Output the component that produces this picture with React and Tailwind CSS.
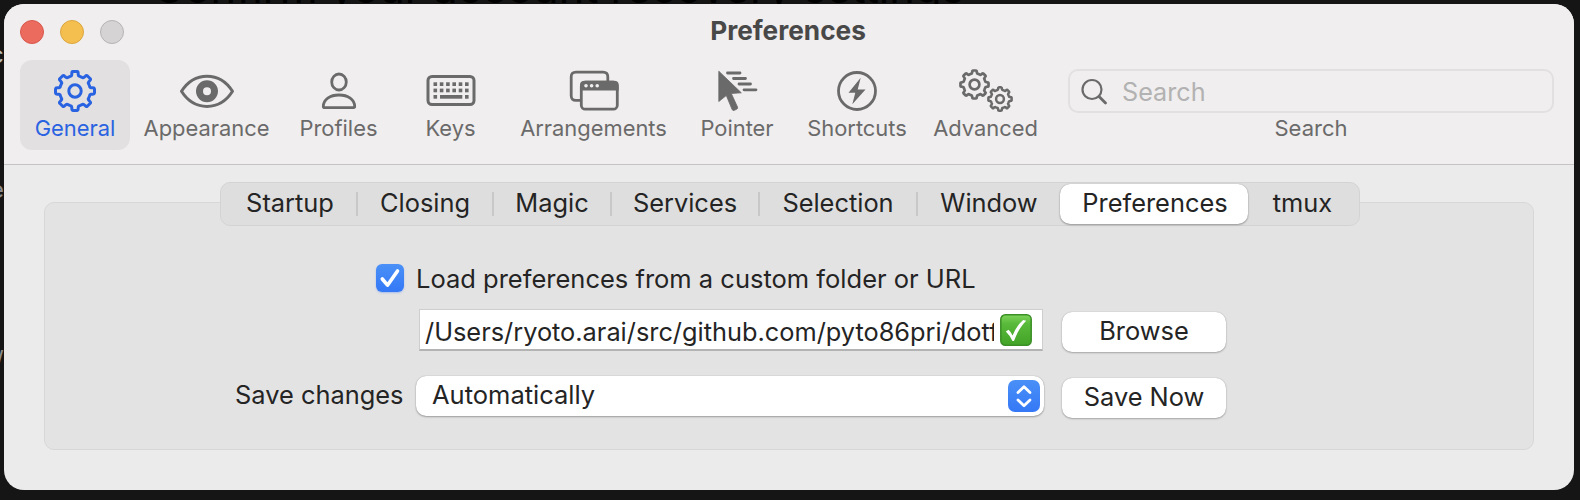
import React from "react";

// Outline of a cog with rounded teeth, centred on the origin.
function cogPath(teeth, outer, inner) {
  const step = (Math.PI * 2) / teeth;
  const depth = outer - inner;
  const at = (r, t) => `${(r * Math.sin(t * step)).toFixed(2)} ${(-r * Math.cos(t * step)).toFixed(2)}`;
  const parts = [];
  for (let i = 0; i < teeth; i++) {
    parts.push(
      `${i ? "L" : "M"}${at(outer, i - 0.14)}`,
      `L${at(outer, i + 0.14)}`,
      `Q${at(outer, i + 0.21)} ${at(outer - depth * 0.4, i + 0.225)}`,
      `L${at(inner + depth * 0.3, i + 0.25)}`,
      `Q${at(inner - depth * 0.08, i + 0.29)} ${at(inner, i + 0.4)}`,
      `L${at(inner, i + 0.6)}`,
      `Q${at(inner - depth * 0.08, i + 0.71)} ${at(inner + depth * 0.3, i + 0.75)}`,
      `L${at(outer - depth * 0.4, i + 0.775)}`,
      `Q${at(outer, i + 0.79)} ${at(outer, i + 0.86)}`
    );
  }
  return parts.join("") + "Z";
}

function Cog({ cx, cy, teeth = 8, outer, inner, hole, stroke }) {
  return (
    <g transform={`translate(${cx} ${cy})`} fill="none" stroke="currentColor" strokeWidth={stroke} strokeLinejoin="round">
      <path d={cogPath(teeth, outer, inner)} />
      <circle r={hole} />
    </g>
  );
}

const icons = {
  general: (
    <svg width="44" height="44" viewBox="0 0 44 44">
      <Cog cx={22} cy={22} outer={19.6} inner={15.4} hole={6.2} stroke={3} />
    </svg>
  ),
  appearance: (
    <svg width="56" height="44" viewBox="0 0 56 44" fill="none" stroke="currentColor">
      <path d="M2.500 22.300C9 12 18 7.200 28 7.200S47 12 53.500 22.300C47 32.600 38 37.400 28 37.400S9 32.600 2.500 22.300Z" strokeWidth="3" strokeLinejoin="round" />
      <circle cx="28" cy="22.300" r="7.500" strokeWidth="7" />
    </svg>
  ),
  profiles: (
    <svg width="44" height="44" viewBox="0 0 44 44" fill="none" stroke="currentColor" strokeWidth="2.800" strokeLinejoin="round">
      <ellipse cx="22" cy="13" rx="7.300" ry="8" />
      <path d="M6.300 37.600C6.300 30.500 13 26 22 26S37.700 30.500 37.700 37.600Q37.700 38.600 36.500 38.600H7.500Q6.300 38.600 6.300 37.600Z" />
    </svg>
  ),
  keys: (
    <svg width="50" height="44" viewBox="0 0 50 44" fill="currentColor">
      <rect x="2" y="7.500" width="46" height="28" rx="4" fill="none" stroke="currentColor" strokeWidth="3" />
      {[7.5, 13.8, 20.1, 26.4, 32.7, 39].map((x) => (
        <React.Fragment key={x}>
          <rect x={x} y="13.300" width="3.600" height="3.700" />
          <rect x={x} y="19.600" width="3.600" height="3.700" />
        </React.Fragment>
      ))}
      <rect x="7.500" y="26" width="3.600" height="3.700" />
      <rect x="14" y="26" width="22.300" height="3.700" />
      <rect x="39" y="26" width="3.600" height="3.700" />
    </svg>
  ),
  arrangements: (
    <svg width="50" height="44" viewBox="0 0 50 44" fill="none" stroke="currentColor" strokeWidth="2.800">
      <path d="M11 31.300H7Q2.200 31.300 2.200 26.800V7.800Q2.200 3.200 7 3.200H34Q38.800 3.200 38.800 7.800V12" />
      <rect x="12.300" y="13.200" width="36" height="27" rx="4" />
      <path d="M11 21.500V16Q11 11.800 16 11.800H45Q49.700 11.800 49.700 16V21.500Z" fill="currentColor" stroke="none" />
      <g fill="#f0eeee" stroke="none">
        <circle cx="17" cy="16.800" r="1.800" />
        <circle cx="22.600" cy="16.800" r="1.800" />
        <circle cx="28.200" cy="16.800" r="1.800" />
      </g>
    </svg>
  ),
  pointer: (
    <svg width="44" height="44" viewBox="0 0 44 44" fill="currentColor">
      <path d="M3.800 2.200V32.500L11.300 26.500L17 40.300Q17.700 42 19.300 41.300L21.600 40.300Q23.200 39.600 22.500 38L16.300 24.500L26.300 23.800Z" stroke="currentColor" strokeWidth="0.800" strokeLinejoin="round" />
      <path d="M12.500 4H25M18.500 9.500H30.500M24 15H35.500M29 20.800H41" fill="none" stroke="currentColor" strokeWidth="2.800" strokeLinecap="round" />
    </svg>
  ),
  shortcuts: (
    <svg width="44" height="44" viewBox="0 0 44 44">
      <circle cx="22" cy="22" r="18.500" fill="none" stroke="currentColor" strokeWidth="2.800" />
      <path d="M25.700 8.800L13.500 23.800H20.300L17.300 35.300L30.500 20.500H22.700Z" fill="currentColor" />
    </svg>
  ),
  advanced: (
    <svg width="54" height="46" viewBox="0 0 54 46">
      <Cog cx={15.5} cy={16.5} outer={14.1} inner={11.2} hole={4.9} stroke={2.7} />
      <Cog cx={41} cy={31} outer={11.7} inner={9.3} hole={3.9} stroke={2.5} />
    </svg>
  ),
};

const toolbar = [
  ["General", "general", "w-[110px] rounded-xl bg-[#e2e0e0] text-[#2a63e2]"],
  ["Appearance", "appearance", "w-[153px]"],
  ["Profiles", "profiles", "w-[111px]"],
  ["Keys", "keys", "w-[113px]"],
  ["Arrangements", "arrangements", "w-[173px]"],
  ["Pointer", "pointer", "w-[114px]"],
  ["Shortcuts", "shortcuts", "w-[126px]"],
  ["Advanced", "advanced", "w-[131px]"],
];

const tabs = [
  ["Startup", "w-[137px] pl-[3px]", true],
  ["Closing", "w-[136px]", true],
  ["Magic", "w-[118px]", true],
  ["Services", "w-[148px]", true],
  ["Selection", "w-[158px]", true],
  ["Window", "w-[142px]", false],
];

function PushButton({ children }) {
  return (
    <button className="flex h-10 w-[164px] items-center justify-center rounded-[10px] bg-white pb-0.5 shadow-[0_0_1px_rgba(0,0,0,0.3),0_1px_2px_rgba(0,0,0,0.25)]">
      {children}
    </button>
  );
}

export default function App() {
  return (
    <div className="relative h-[500px] w-[1580px] overflow-hidden bg-[#151515] pl-1 pt-1 font-['Inter','Liberation_Sans',sans-serif]">
      <div className="absolute left-[153px] top-[-38px] whitespace-nowrap text-[43.3px] leading-[50px] text-black">
        Confirm your account recovery settings
      </div>
      <div className="absolute left-[-10px] top-[40px] text-[24px] leading-[30px] text-[#bdbdbd]">c</div>
      <div className="absolute left-[-10px] top-[175px] text-[24px] leading-[30px] text-[#8d8d8d]">e</div>
      <div className="absolute left-[-5px] top-[345px] text-[24px] leading-[30px] text-[#8d8d8d]">/</div>

      <div className="relative flex h-[486px] w-[1570px] flex-col overflow-hidden rounded-[20px] bg-[#ecebeb] text-[25.4px] text-[#242424]">
        <header className="flex h-[161px] shrink-0 flex-col border-b border-[#c5c3c3] bg-[#f0eeee] text-[#6b6a6a]">
          <div className="flex h-14 items-center px-4">
            <div className="flex w-[104px] gap-4">
              <span className="size-6 rounded-full border border-[#d8574b] bg-[#ec6b5f]" />
              <span className="size-6 rounded-full border border-[#d9a63f] bg-[#f5bf4f]" />
              <span className="size-6 rounded-full border border-[#b5b3b4] bg-[#d5d3d4]" />
            </div>
            <h1 className="w-[1328px] pb-0.5 text-center text-[26.2px] font-bold leading-8 text-[#494848]">Preferences</h1>
          </div>
          <div className="flex pl-4">
            {toolbar.map(([label, icon, look]) => (
              <div key={label} className={`flex h-[90px] flex-col items-center pt-[9px] ${look}`}>
                <div className="flex h-11 items-center">{icons[icon]}</div>
                <span className="mt-px text-[21.9px] leading-7">{label}</span>
              </div>
            ))}
            <div className="ml-[17px] flex w-[486px] flex-col items-center pt-[9px]">
              <div className="flex h-11 w-full items-center rounded-[10px] border-2 border-[#e2e0e1] pl-[11px]">
                <svg className="mt-0.5" width="28" height="28" viewBox="0 0 28 28" fill="none" stroke="currentColor" strokeLinecap="round">
                  <circle cx="11" cy="11.500" r="9.500" strokeWidth="2.200" />
                  <path d="M18 18.500L24.500 25" strokeWidth="2.800" />
                </svg>
                <span className="ml-[13px] pt-[3px] text-[25.2px] text-[#b3b2b2]">Search</span>
              </div>
              <span className="mt-px text-[22px] leading-7">Search</span>
            </div>
          </div>
        </header>

        <main className="flex flex-col items-center pt-[17px]">
          <div className="z-10 ml-0.5 flex h-11 w-[1140px] items-center rounded-[10px] border border-[#d4d3d3] bg-[#dfdede]">
            {tabs.map(([label, width, divider]) => (
              <div key={label} className={`flex h-6 shrink-0 items-center justify-center pb-0.5 ${width} ${divider ? "border-r-2 border-[#c9c8c8]" : ""}`}>
                {label}
              </div>
            ))}
            <div className="flex h-10 w-[188px] shrink-0 items-center justify-center rounded-[10px] bg-white pb-0.5 pl-0.5 shadow-[0_0_1px_rgba(0,0,0,0.3),0_1px_2px_rgba(0,0,0,0.3)]">
              Preferences
            </div>
            <div className="flex flex-1 justify-center pb-0.5 pr-0.5">tmux</div>
          </div>

          <section className="-mt-6 flex h-[248px] w-[1490px] flex-col rounded-[10px] border border-[#d8d7d7] bg-[#e4e3e3] pl-[190px] pt-[61px]">
            <div className="flex h-7 items-center pl-[141px]">
              <span className="flex size-7 items-center justify-center rounded-md bg-linear-to-b from-[#4a90f7] to-[#3478f6] shadow-[0_1px_2px_rgba(52,120,246,0.35)]">
                <svg width="28" height="28" viewBox="0 0 28 28" fill="none" stroke="white" strokeWidth="3.600" strokeLinecap="round" strokeLinejoin="round">
                  <path d="M6.300 15L11.500 21.200L21.500 7" />
                </svg>
              </span>
              <span className="ml-3 pt-[3px] text-[25.5px]">Load preferences from a custom folder or URL</span>
            </div>

            <div className="mt-[17px] flex pl-[184px]">
              <div className="flex h-[42px] w-[624px] items-center border border-b-2 border-[#cfcece] border-b-[#b4b3b3] bg-white pl-[5px]">
                <span className="w-[569px] overflow-hidden whitespace-nowrap pt-[5px] text-[25.35px]">/Users/ryoto.arai/src/github.com/pyto86pri/dotfiles</span>
                <svg className="ml-[6px] shrink-0" width="32" height="32" viewBox="0 0 32 32">
                  <defs>
                    <linearGradient id="valid" x1="0" y1="0" x2="0" y2="1">
                      <stop offset="0" stopColor="#7fd45c" />
                      <stop offset="0.300" stopColor="#58b93a" />
                      <stop offset="1" stopColor="#43a327" />
                    </linearGradient>
                  </defs>
                  <rect x="0.800" y="0.800" width="30.400" height="30.400" rx="4.500" fill="url(#valid)" stroke="#3b8f26" strokeWidth="1.500" />
                  <path d="M5.800 17.500L8.500 15.800Q11 18 12.600 21.500Q16.500 11.500 23.200 6L26.200 6.800Q18.500 14.500 14 27H12.500Q10 21.500 5.800 17.500Z" fill="#fff" />
                </svg>
              </div>
              <div className="ml-[19px] mt-[3px]">
                <PushButton>Browse</PushButton>
              </div>
            </div>

            <div className="mt-[24px] flex">
              <span className="mt-[3px] w-[166px] whitespace-nowrap text-right leading-8">Save changes</span>
              <div className="ml-[15px] flex h-10 w-[628px] items-center justify-between rounded-[10px] bg-white pl-4 pr-1 shadow-[0_0_1px_rgba(0,0,0,0.3),0_1px_2px_rgba(0,0,0,0.3)]">
                <span className="pb-px text-[25.5px]">Automatically</span>
                <svg width="32" height="32" viewBox="0 0 32 32">
                  <defs>
                    <linearGradient id="stepper" x1="0" y1="0" x2="0" y2="1">
                      <stop offset="0" stopColor="#4a90f7" />
                      <stop offset="1" stopColor="#3478f6" />
                    </linearGradient>
                  </defs>
                  <rect width="32" height="32" rx="7" fill="url(#stepper)" />
                  <path d="M10 12.500L16 6.800L22 12.500M10 20L16 25.700L22 20" fill="none" stroke="#fff" strokeWidth="2.800" strokeLinecap="round" strokeLinejoin="round" />
                </svg>
              </div>
              <div className="ml-[18px] mt-[2px]">
                <PushButton>Save Now</PushButton>
              </div>
            </div>
          </section>
        </main>
      </div>
    </div>
  );
}
